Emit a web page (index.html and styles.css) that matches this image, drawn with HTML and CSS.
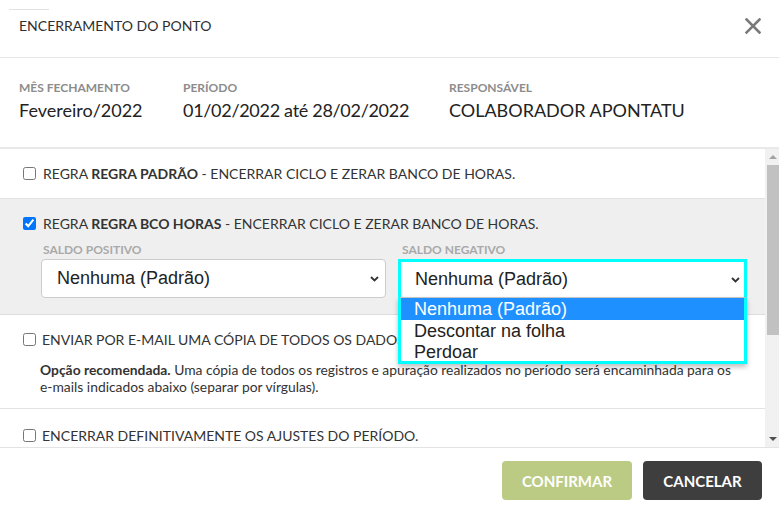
FILE: index.html
```html
<!DOCTYPE html>
<html lang="pt-BR">
<head>
<meta charset="utf-8">
<title>Encerramento do ponto</title>
<link rel="stylesheet" href="styles.css">
</head>
<body>
<div class="modal">
  <header class="modal-header">
    <div class="grip"></div>
    <div class="title-row">
      <h1 class="title">ENCERRAMENTO DO PONTO</h1>
      <button class="close" type="button" aria-label="Fechar">
        <svg width="16" height="16" viewBox="0 0 16 16"><path d="M1.5 1.5 L14.5 14.5 M14.5 1.5 L1.5 14.5" stroke="#7a7a7a" stroke-width="2.6" stroke-linecap="square"/></svg>
      </button>
    </div>
  </header>

  <section class="info">
    <div class="info-col">
      <div class="info-label">MÊS FECHAMENTO</div>
      <div class="info-value">Fevereiro/2022</div>
    </div>
    <div class="info-col">
      <div class="info-label">PERÍODO</div>
      <div class="info-value info-period">01/02/2022 até 28/02/2022</div>
    </div>
    <div class="info-col">
      <div class="info-label">RESPONSÁVEL</div>
      <div class="info-value">COLABORADOR APONTATU</div>
    </div>
  </section>

  <div class="scroll">
    <div class="scroll-content">
      <div class="opt">
        <label class="check"><input type="checkbox"><span>REGRA <b>REGRA PADRÃO</b> - ENCERRAR CICLO E ZERAR BANCO DE HORAS.</span></label>
      </div>

      <div class="opt opt-active">
        <label class="check"><input type="checkbox" checked><span>REGRA <b>REGRA BCO HORAS</b> - ENCERRAR CICLO E ZERAR BANCO DE HORAS.</span></label>
        <div class="selects">
          <div class="sel-col">
            <div class="sel-label">SALDO POSITIVO</div>
            <div class="select">
              <span class="select-text">Nenhuma (Padrão)</span>
              <svg class="chev" width="9" height="6" viewBox="0 0 9 6"><path d="M1 1 L4.5 4.5 L8 1" fill="none" stroke="#333" stroke-width="1.8"/></svg>
            </div>
          </div>
          <div class="sel-col">
            <div class="sel-label sel-label-2">SALDO NEGATIVO</div>
            <div class="select select-open">
              <span class="select-text">Nenhuma (Padrão)</span>
              <svg class="chev" width="9" height="6" viewBox="0 0 9 6"><path d="M1 1 L4.5 4.5 L8 1" fill="none" stroke="#333" stroke-width="1.8"/></svg>
              <ul class="dropdown">
                <li class="selected">Nenhuma (Padrão)</li>
                <li>Descontar na folha</li>
                <li class="last">Perdoar</li>
              </ul>
            </div>
          </div>
        </div>
      </div>

      <div class="opt opt-email">
        <label class="check check-tight"><input type="checkbox"><span>ENVIAR POR E-MAIL UMA CÓPIA DE TODOS OS DADOS DO PERÍODO.</span></label>
        <p class="desc"><b>Opção recomendada.</b> Uma cópia de todos os registros e apuração realizados no período será encaminhada para os<br>e-mails indicados abaixo (separar por vírgulas).</p>
      </div>

      <div class="opt opt-last">
        <label class="check check-tight"><input type="checkbox"><span>ENCERRAR DEFINITIVAMENTE OS AJUSTES DO PERÍODO.</span></label>
      </div>
    </div>

    <div class="scrollbar">
      <div class="sb-btn"><span class="tri tri-up"></span></div>
      <div class="sb-track"><div class="sb-thumb"></div></div>
      <div class="sb-btn"><span class="tri tri-down"></span></div>
    </div>
  </div>

  <footer class="modal-footer">
    <button class="btn btn-confirm" type="button">CONFIRMAR</button>
    <button class="btn btn-cancel" type="button">CANCELAR</button>
  </footer>
</div>
</body>
</html>
```

FILE: styles.css
```css
* { box-sizing: border-box; }

html, body {
  margin: 0;
  padding: 0;
  background: #ffffff;
}

body {
  font-family: Lato, "Open Sans", Arial, sans-serif;
  color: #333333;
  width: 779px;
  height: 513px;
  overflow: hidden;
}

.modal {
  width: 779px;
  height: 513px;
  display: flex;
  flex-direction: column;
  background: #ffffff;
}

/* Header */
.modal-header {
  padding: 9px 0 21px 0;
  border-bottom: 1px solid #e6e6e6;
}

.grip {
  width: 40px;
  height: 1px;
  margin-left: 9px;
  background: #e2e2e2;
}

.title-row {
  margin-top: 6px;
  height: 20px;
  padding: 0 17px 0 19px;
  display: flex;
  align-items: center;
  justify-content: space-between;
}

.title {
  margin: 0;
  font-size: 14px;
  font-weight: 400;
  line-height: 20px;
  color: #2f2f2f;
}

.close {
  border: 0;
  background: none;
  padding: 0;
  width: 16px;
  height: 16px;
  display: flex;
  margin-right: 1px;
}

/* Info */
.info {
  display: grid;
  grid-template-columns: 164px 266px 1fr;
  padding: 23px 0 26px 19px;
  border-bottom: 2px solid #e8e8e8;
}

.info-label {
  font-size: 12px;
  font-weight: 700;
  line-height: 14px;
  color: #8c8c8c;
}

.info-value {
  margin-top: 4px;
  font-size: 18px;
  line-height: 22px;
  color: #222222;
}

.info-period { letter-spacing: -0.3px; }

/* Scroll area */
.scroll {
  height: 299px;
  display: flex;
  border-bottom: 1px solid #e3e3e3;
}

.scroll-content {
  flex: 1;
  overflow: hidden;
}

.opt {
  padding: 16px 18px 16px 23px;
  border-bottom: 1px solid #e3e3e3;
}

.opt-active {
  background: #efefef;
  border-bottom-color: #dddddd;
}

.opt-email { padding-bottom: 13px; }

.opt-last {
  padding-top: 18px;
  border-bottom: 0;
}

.check {
  display: flex;
  align-items: center;
  gap: 7px;
  height: 17px;
  font-size: 14px;
  line-height: 17px;
  color: #333333;
  white-space: nowrap;
}

.check-tight { gap: 6px; }

.check input {
  margin: 0;
  width: 13px;
  height: 13px;
  flex: none;
}

.check b { font-weight: 700; }

/* Selects */
.selects {
  display: grid;
  grid-template-columns: 345px 349px;
  gap: 12px;
  margin: 11px 0 0 18px;
}

.sel-label {
  font-size: 12px;
  font-weight: 700;
  line-height: 14px;
  color: #a9a9a9;
  padding-left: 2px;
  margin-bottom: 2px;
}

.sel-label-2 { padding-left: 4px; }

.select {
  position: relative;
  height: 39px;
  border: 1px solid #cccccc;
  border-radius: 4px;
  background: #ffffff;
  display: flex;
  align-items: center;
  justify-content: space-between;
  padding: 0 6px 0 15px;
  font-family: "Liberation Sans", Arial, sans-serif;
  font-size: 18px;
  color: #222222;
}

.select-open {
  height: 38px;
  margin-top: 1px;
  border: 3px solid #00ffff;
  border-bottom: 0;
  border-radius: 0;
  padding: 0 4px 0 14px;
}

.dropdown {
  position: absolute;
  z-index: 10;
  top: 100%;
  left: -3px;
  right: -3px;
  margin: 0;
  padding: 0;
  list-style: none;
  background: #ffffff;
  border: 3px solid #00ffff;
  border-top: 1px solid #c4c4c4;
  box-shadow: 0 3px 5px rgba(0, 0, 0, 0.25);
}

.dropdown li {
  height: 21px;
  line-height: 22px;
  padding-left: 13px;
  color: #222222;
}

.dropdown li.selected {
  height: 22px;
  line-height: 22px;
  background: #1e90ff;
  color: #ffffff;
}

.dropdown li.last {
  height: 20px;
  line-height: 23px;
}

/* Description */
.desc {
  margin: 13px 0 0 0;
  padding-left: 17px;
  font-size: 13.85px;
  line-height: 17px;
  color: #333333;
  white-space: nowrap;
}

/* Scrollbar */
.scrollbar {
  width: 14px;
  flex: none;
  background: #f1f1f1;
  display: flex;
  flex-direction: column;
}

.sb-btn {
  height: 16px;
  display: flex;
  align-items: center;
  justify-content: center;
  padding-left: 2px;
}

.sb-track {
  flex: 1;
}

.sb-thumb {
  margin-left: 2px;
  height: 170px;
  background: #c1c1c1;
}

.tri {
  width: 0;
  height: 0;
  border-left: 4px solid transparent;
  border-right: 4px solid transparent;
}

.tri-up { border-bottom: 4px solid #a3a3a3; }
.tri-down { border-top: 4px solid #505050; }

/* Footer */
.modal-footer {
  flex: 1;
  display: flex;
  justify-content: flex-end;
  align-items: flex-start;
  gap: 11px;
  padding: 13px 17px 0 0;
}

.btn {
  height: 39px;
  border: 0;
  border-radius: 4px;
  font-family: Lato, Arial, sans-serif;
  font-size: 15px;
  font-weight: 700;
  color: #ffffff;
  padding: 0;
}

.btn-confirm {
  width: 130px;
  background: #bccb84;
}

.btn-cancel {
  width: 119px;
  background: #3e3e3e;
}
```
